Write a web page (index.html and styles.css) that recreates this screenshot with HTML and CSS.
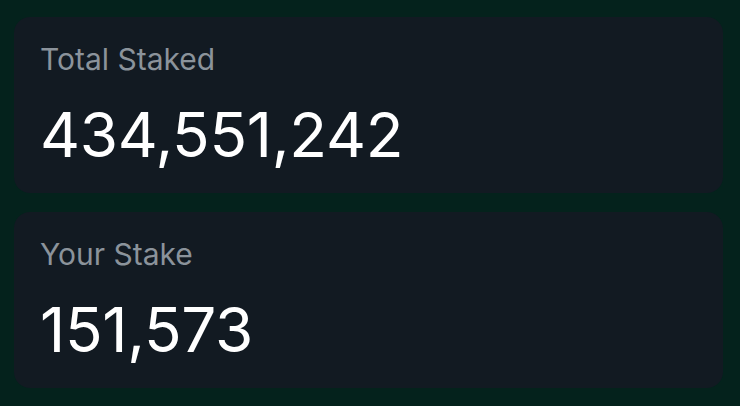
FILE: index.html
```html
<!DOCTYPE html>
<html>
<head>
<meta charset="utf-8">
<link rel="stylesheet" href="styles.css">
</head>
<body>
<main class="stats">
  <section class="card">
    <div class="label">Total Staked</div>
    <div class="value">434,551,242</div>
  </section>
  <section class="card">
    <div class="label">Your Stake</div>
    <div class="value">151,573</div>
  </section>
</main>
</body>
</html>
```

FILE: styles.css
```css
html, body {
  margin: 0;
  padding: 0;
  background: #04221c;
  width: 740px;
  height: 406px;
  overflow: hidden;
}
body {
  font-family: Inter, "Noto Sans", sans-serif;
}
.stats {
  display: flex;
  flex-direction: column;
  gap: 19px;
  padding: 17px 17px 0 14px;
}
.card {
  background: #121a22;
  border-radius: 16px;
  height: 176px;
  box-sizing: border-box;
  padding: 27px 27px 0 26px;
  display: flex;
  flex-direction: column;
}
.label {
  color: #8b939b;
  font-size: 30px;
  line-height: 30px;
}
.value {
  color: #ffffff;
  font-size: 62px;
  line-height: 62px;
  letter-spacing: -0.3px;
  margin-top: 30px;
}
```
